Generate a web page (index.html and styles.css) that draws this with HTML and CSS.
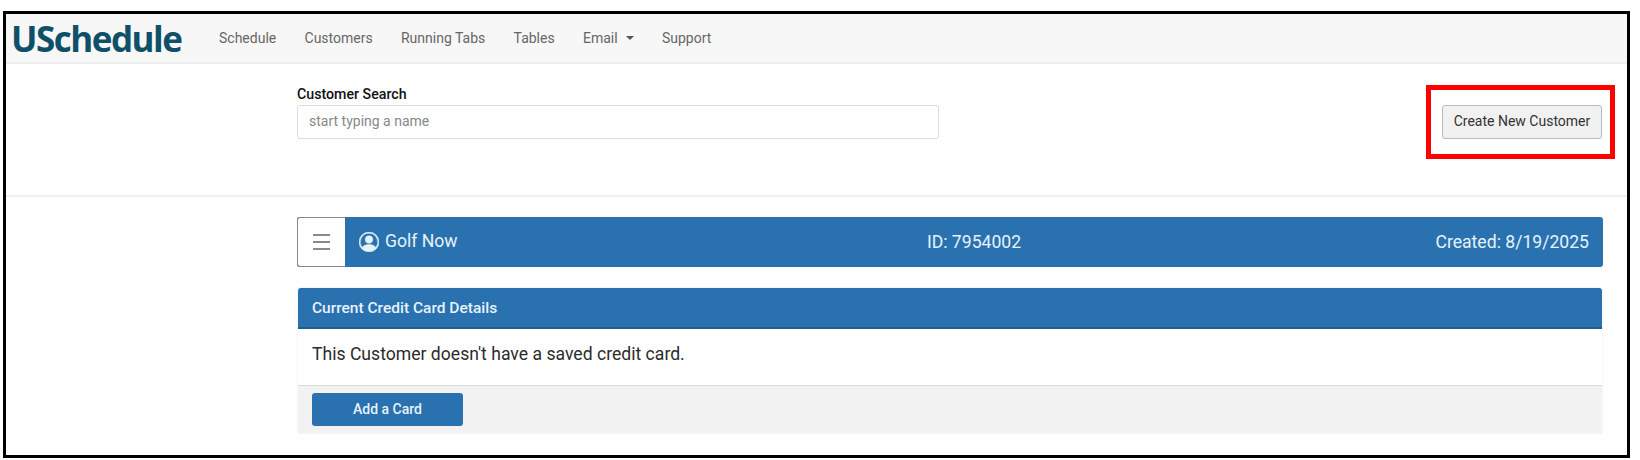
FILE: index.html
```html
<!DOCTYPE html>
<html lang="en">
<head>
    <meta charset="UTF-8">
    <title>Customers</title>
    <link rel="stylesheet" href="styles.css">
</head>
<body>
    <div class="frame">
        <nav class="navbar">
            <a class="brand">USchedule</a>
            <ul class="nav-links">
                <li>Schedule</li>
                <li>Customers</li>
                <li>Running Tabs</li>
                <li>Tables</li>
                <li class="dropdown">Email</li>
                <li>Support</li>
            </ul>
        </nav>

        <section class="search-row">
            <div class="search-group">
                <label for="customer-search">Customer Search</label>
                <input type="text" id="customer-search" placeholder="start typing a name">
            </div>
            <div class="highlight">
                <button class="btn-light">Create New Customer</button>
            </div>
        </section>

        <main class="content">
            <div class="customer-bar">
                <button class="menu-btn" aria-label="Menu">
                    <span></span><span></span><span></span>
                </button>
                <div class="customer-info">
                    <div class="customer-name">
                        <svg viewBox="0 0 16 16" width="20" height="20" fill="currentColor" stroke="currentColor" stroke-width="0.4">
                            <path d="M11 6a3 3 0 1 1-6 0 3 3 0 0 1 6 0"/>
                            <path fill-rule="evenodd" d="M0 8a8 8 0 1 1 16 0A8 8 0 0 1 0 8m8-7a7 7 0 0 0-5.468 11.37C3.242 11.226 4.805 10 8 10s4.757 1.225 5.468 2.37A7 7 0 0 0 8 1"/>
                        </svg>
                        <span class="customer-label">Golf Now</span>
                    </div>
                    <div class="customer-id">ID: 7954002</div>
                    <div class="customer-created">Created: 8/19/2025</div>
                </div>
            </div>

            <div class="card">
                <div class="card-header">Current Credit Card Details</div>
                <div class="card-body">This Customer doesn't have a saved credit card.</div>
                <div class="card-footer">
                    <button class="btn-primary">Add a Card</button>
                </div>
            </div>
        </main>
    </div>
</body>
</html>
```

FILE: styles.css
```css
* {
    margin: 0;
    padding: 0;
    box-sizing: border-box;
    font-family: "Roboto", sans-serif;
}

:root {
    --blue: #2a71b0;
    --blue-dark: #1d5f8f;
    --line: #efefef;
    --text: #2b2b2b;
}

body {
    background-color: #fff;
    height: 460px;
    overflow: hidden;
}

.frame {
    width: 1627px;
    height: 447px;
    margin: 11px 0 0 3px;
    border: 3px solid #000;
    background-color: #fefefe;
}

/* top nav */
.navbar {
    display: flex;
    align-items: center;
    height: 50px;
    background-color: #f7f7f7;
    border-bottom: 2px solid var(--line);
}

.brand {
    width: 213px;
    padding-left: 5px;
    font-family: "Open Sans", sans-serif;
    font-size: 35px;
    font-weight: 700;
    letter-spacing: -1.5px;
    color: #0e5068;
}

.nav-links {
    display: flex;
    gap: 28.3px;
    list-style: none;
    font-size: 14px;
    color: #666;
}

.dropdown::after {
    content: "";
    display: inline-block;
    margin-left: 8px;
    vertical-align: 3px;
    border-top: 4px solid #555;
    border-left: 4px solid transparent;
    border-right: 4px solid transparent;
}

/* search */
.search-row {
    display: flex;
    justify-content: space-between;
    align-items: flex-start;
    height: 133px;
    padding: 21px 12px 0 291px;
    border-bottom: 2px solid var(--line);
}

.search-group {
    display: flex;
    flex-direction: column;
    gap: 2px;
    width: 642px;
}

.search-group label {
    padding-top: 1px;
    font-size: 14.2px;
    font-weight: 500;
    line-height: 17px;
    color: #111;
}

.search-group input {
    height: 34px;
    padding: 0 11px 2px;
    font-size: 14px;
    border: 1px solid #ddd;
    border-radius: 3px;
    background-color: #fff;
    outline: none;
}

.search-group input::placeholder {
    color: #888;
}

.highlight {
    padding: 15px 8px 15px 11px;
    border: 5px solid #f00;
}

.btn-light {
    display: block;
    width: 160px;
    height: 34px;
    padding-bottom: 2px;
    font-size: 14px;
    color: #333;
    background-color: #f1f1f1;
    border: 1px solid #bbb;
    border-radius: 3px;
}

/* customer */
.content {
    padding: 20px 24px 0 291px;
}

.customer-bar {
    display: flex;
    height: 50px;
    background-color: var(--blue);
    border-radius: 3px;
    color: #e6f3fb;
    font-size: 17.6px;
}

.menu-btn {
    display: flex;
    flex-direction: column;
    justify-content: center;
    align-items: center;
    gap: 5px;
    width: 48px;
    background-color: #fff;
    border: 1px solid #888;
    border-right: none;
    border-radius: 3px 0 0 3px;
}

.menu-btn span {
    display: block;
    width: 17px;
    height: 2px;
    background-color: #8a8a8a;
}

.customer-info {
    flex: 1;
    display: grid;
    grid-template-columns: 1fr auto 1fr;
    align-items: center;
    padding: 0 14px 0 14px;
}

.customer-name {
    display: flex;
    align-items: center;
    gap: 6px;
}

.customer-label {
    padding-bottom: 3px;
}

.customer-created {
    text-align: right;
}

.card {
    margin: 21px 1px 0;
    background-color: #fff;
    box-shadow: 0 0 2px rgba(0, 0, 0, 0.12);
    border-radius: 3px;
}

.card-header {
    display: flex;
    align-items: center;
    height: 41px;
    padding-left: 14px;
    background-color: var(--blue);
    border-bottom: 2px solid var(--blue-dark);
    border-radius: 3px 3px 0 0;
    color: #e6f3fb;
    font-size: 15.5px;
    font-weight: 500;
}

.card-body {
    display: flex;
    align-items: center;
    height: 56px;
    padding: 0 0 6px 14px;
    font-size: 17.6px;
    color: var(--text);
}

.card-footer {
    height: 48px;
    padding: 7px 14px;
    background-color: #f2f2f2;
    border-top: 1px solid #ddd;
}

.btn-primary {
    width: 151px;
    height: 33px;
    padding-bottom: 2px;
    font-size: 14px;
    font-weight: 500;
    color: #e6f3fb;
    background-color: var(--blue);
    border: none;
    border-radius: 3px;
}
```
